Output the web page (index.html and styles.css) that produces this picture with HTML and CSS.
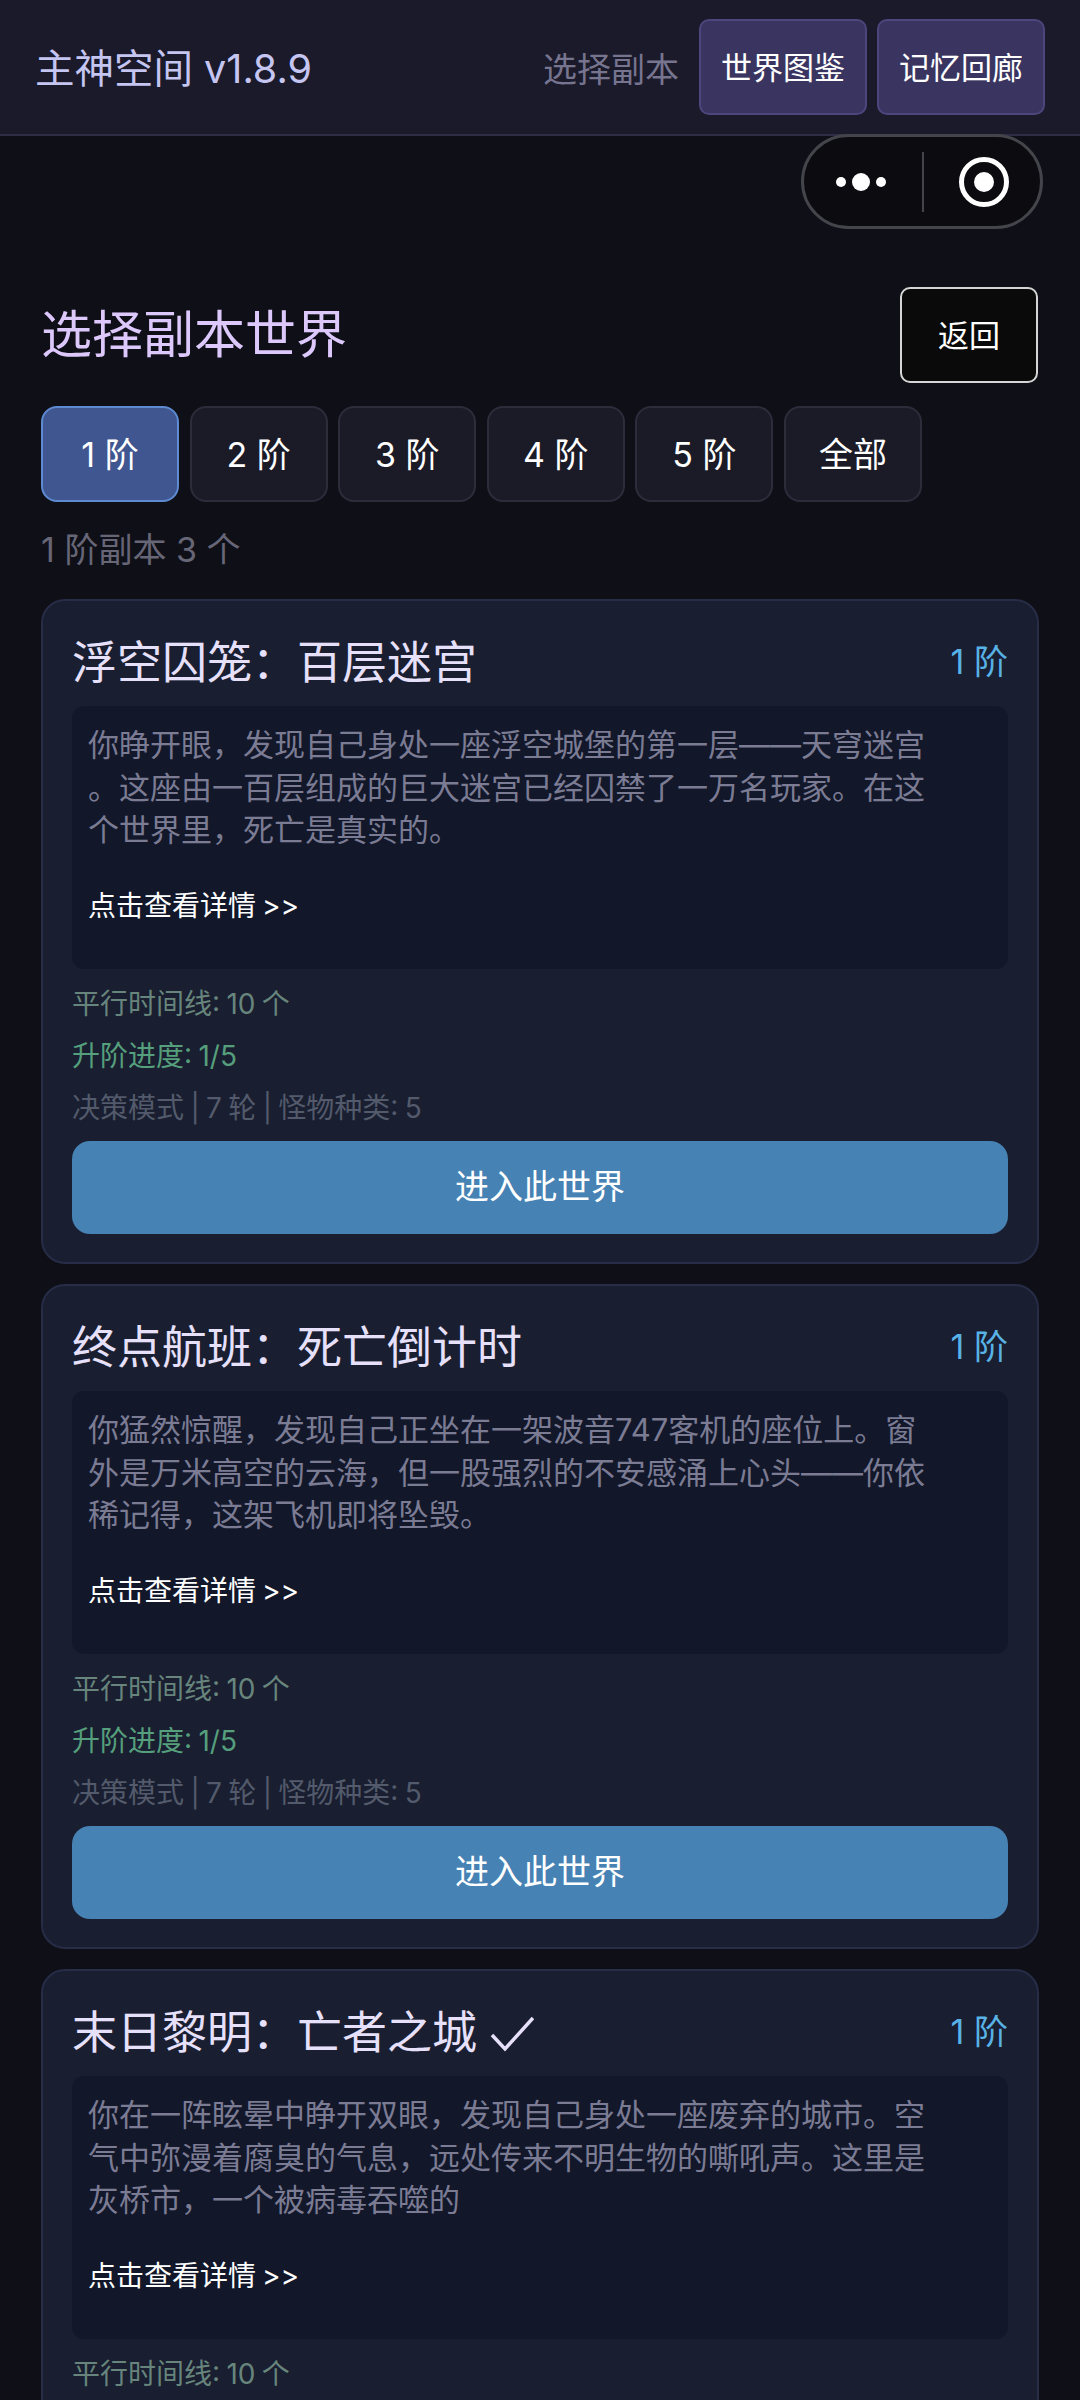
FILE: index.html
```html
<!DOCTYPE html>
<html lang="zh-CN">

<head>
    <meta charset="UTF-8">
    <meta name="viewport" content="width=device-width, initial-scale=1.0">
    <title>主神空间</title>
    <link rel="stylesheet" href="styles.css">
</head>

<body>
    <div class="page">
        <header class="top-bar">
            <div class="app-name">主神空间 v1.8.9</div>
            <div class="top-right">
                <span class="top-label">选择副本</span>
                <button type="button" class="top-btn">世界图鉴</button>
                <button type="button" class="top-btn">记忆回廊</button>
            </div>
        </header>

        <!-- 小程序胶囊 -->
        <div class="capsule">
            <div class="capsule-dots">
                <span class="dot"></span>
                <span class="dot dot-big"></span>
                <span class="dot"></span>
            </div>
            <div class="capsule-line"></div>
            <div class="capsule-target"><span></span></div>
        </div>

        <main class="content">
            <div class="title-row">
                <h1>选择副本世界</h1>
                <button type="button" class="back-btn">返回</button>
            </div>

            <div class="tabs">
                <button type="button" class="tab active">1 阶</button>
                <button type="button" class="tab">2 阶</button>
                <button type="button" class="tab">3 阶</button>
                <button type="button" class="tab">4 阶</button>
                <button type="button" class="tab">5 阶</button>
                <button type="button" class="tab">全部</button>
            </div>

            <div class="count">1 阶副本 3 个</div>

            <section class="card">
                <div class="card-head">
                    <h2>浮空囚笼&#xFF1A;百层迷宫</h2>
                    <span class="rank">1 阶</span>
                </div>
                <div class="desc">
                    <p>你睁开眼&#xFF0C;发现自己身处一座浮空城堡的第一层——天穹迷宫<br>。这座由一百层组成的巨大迷宫已经囚禁了一万名玩家。在这<br>个世界里&#xFF0C;死亡是真实的。</p>
                    <div class="more">点击查看详情 &gt;&gt;</div>
                </div>
                <div class="meta meta-line">平行时间线: 10 个</div>
                <div class="meta meta-rank">升阶进度: 1/5</div>
                <div class="meta meta-mode">决策模式 | 7 轮 | 怪物种类: 5</div>
                <button type="button" class="enter-btn">进入此世界</button>
            </section>

            <section class="card">
                <div class="card-head">
                    <h2>终点航班&#xFF1A;死亡倒计时</h2>
                    <span class="rank">1 阶</span>
                </div>
                <div class="desc">
                    <p>你猛然惊醒&#xFF0C;发现自己正坐在一架波音747客机的座位上。窗<br>外是万米高空的云海&#xFF0C;但一股强烈的不安感涌上心头——你依<br>稀记得&#xFF0C;这架飞机即将坠毁。</p>
                    <div class="more">点击查看详情 &gt;&gt;</div>
                </div>
                <div class="meta meta-line">平行时间线: 10 个</div>
                <div class="meta meta-rank">升阶进度: 1/5</div>
                <div class="meta meta-mode">决策模式 | 7 轮 | 怪物种类: 5</div>
                <button type="button" class="enter-btn">进入此世界</button>
            </section>

            <section class="card">
                <div class="card-head">
                    <h2>末日黎明&#xFF1A;亡者之城 <svg class="done" width="44" height="36" viewBox="0 0 44 36"><path d="M2 19 L15 33 L43 2" fill="none" stroke="#e6e0fb" stroke-width="3.5"/></svg></h2>
                    <span class="rank">1 阶</span>
                </div>
                <div class="desc">
                    <p>你在一阵眩晕中睁开双眼&#xFF0C;发现自己身处一座废弃的城市。空<br>气中弥漫着腐臭的气息&#xFF0C;远处传来不明生物的嘶吼声。这里是<br>灰桥市&#xFF0C;一个被病毒吞噬的</p>
                    <div class="more">点击查看详情 &gt;&gt;</div>
                </div>
                <div class="meta meta-line">平行时间线: 10 个</div>
            </section>
        </main>
    </div>
</body>

</html>
```
FILE: styles.css
```css
* {
    box-sizing: border-box;
}

body {
    margin: 0;
    background-color: #0f0f17;
    font-family: Inter, "Noto Sans CJK SC", sans-serif;
    color: #fff;
}

button {
    font-family: inherit;
    cursor: pointer;
    color: #fff;
    padding: 0 0 3px;
}

.page {
    position: relative;
    height: 100vh;
    overflow: hidden;
}

.top-bar {
    height: 136px;
    padding: 0 35px;
    background-color: #1a1a2a;
    border-bottom: 2px solid #2f2d46;
    display: flex;
    justify-content: space-between;
    align-items: center;
}

.app-name {
    font-size: 39.5px;
    margin-bottom: 4px;
    color: #c5c5f2;
}

.top-right {
    display: flex;
    align-items: center;
    gap: 10px;
}

.top-label {
    font-size: 34px;
    color: #77748f;
    margin-right: 10px;
}

.top-btn {
    width: 168px;
    height: 96px;
    font-size: 31px;
    background-color: #3a3560;
    border: 2px solid #4c467c;
    border-radius: 10px;
}

.capsule {
    position: absolute;
    top: 134px;
    left: 801px;
    width: 242px;
    height: 95px;
    background-color: #0b0b10;
    border: 3px solid #44444b;
    border-radius: 48px;
    display: flex;
    align-items: center;
}

.capsule-dots {
    width: 118px;
    padding-right: 4px;
    display: flex;
    justify-content: center;
    align-items: center;
    gap: 6px;
}

.dot {
    width: 10px;
    height: 10px;
    border-radius: 50%;
    background-color: #fff;
}

.dot-big {
    width: 18px;
    height: 18px;
}

.capsule-line {
    width: 2px;
    height: 60px;
    background-color: #44444b;
}

.capsule-target {
    flex: 1;
    padding-left: 4px;
    display: flex;
    justify-content: center;
}

.capsule-target span {
    width: 50px;
    height: 50px;
    border: 5px solid #fff;
    border-radius: 50%;
    display: flex;
    justify-content: center;
    align-items: center;
}

.capsule-target span::after {
    content: "";
    width: 20px;
    height: 20px;
    border-radius: 50%;
    background-color: #fff;
}

.content {
    padding: 0 41px;
}

.title-row {
    margin-top: 151px;
    display: flex;
    justify-content: space-between;
    align-items: center;
}

h1 {
    margin: 0 0 8px;
    font-size: 51px;
    font-weight: 400;
    color: #dcc8fa;
}

.back-btn {
    width: 138px;
    height: 96px;
    margin-right: 1px;
    font-size: 31px;
    background-color: #0a0a0a;
    border: 2px solid #d5d5d5;
    border-radius: 10px;
}

.tabs {
    margin-top: 23px;
    display: flex;
    gap: 10.6px;
}

.tab {
    width: 138px;
    height: 96px;
    font-size: 34px;
    background-color: #1b1b28;
    border: 2px solid #2c2c3b;
    border-radius: 16px;
}

.tab.active {
    background-color: #3f5690;
    border-color: #5d8ad0;
}

.count {
    margin-top: 26px;
    font-size: 34px;
    line-height: 44px;
    color: #666677;
}

.card {
    margin-top: 27px;
    height: 665px;
    padding: 24px 29px 0;
    background-color: #191e30;
    border: 2px solid #272c47;
    border-radius: 24px;
}

.card + .card {
    margin-top: 20px;
}

.card-head {
    height: 68px;
    display: flex;
    justify-content: space-between;
    align-items: center;
}

h2 {
    margin: 0;
    font-size: 45px;
    font-weight: 400;
    color: #e6e0fb;
}

.done {
    vertical-align: -3px;
}

.rank {
    font-size: 34px;
    color: #58b2e6;
}

.desc {
    margin-top: 13px;
    height: 263px;
    padding: 18px 16px 0;
    background-color: #12172a;
    border-radius: 12px;
}

.desc p {
    margin: 0;
    font-size: 31px;
    line-height: 42.5px;
    white-space: nowrap;
    color: #7b7c94;
}

.more {
    margin-top: 34px;
    font-size: 28px;
    line-height: 40px;
    word-spacing: -2px;
    color: #fff;
}

.meta {
    font-size: 28px;
    line-height: 52px;
    word-spacing: -1.5px;
}

.desc + .meta {
    margin-top: 9px;
}

.meta-line {
    color: #67857c;
}

.meta-rank {
    color: #559f7c;
}

.meta-mode {
    color: #525a6b;
}

.enter-btn {
    display: block;
    width: 100%;
    height: 93px;
    margin-top: 7px;
    padding-bottom: 6px;
    font-size: 34px;
    background-color: #4682b4;
    border: none;
    border-radius: 18px;
}
```
